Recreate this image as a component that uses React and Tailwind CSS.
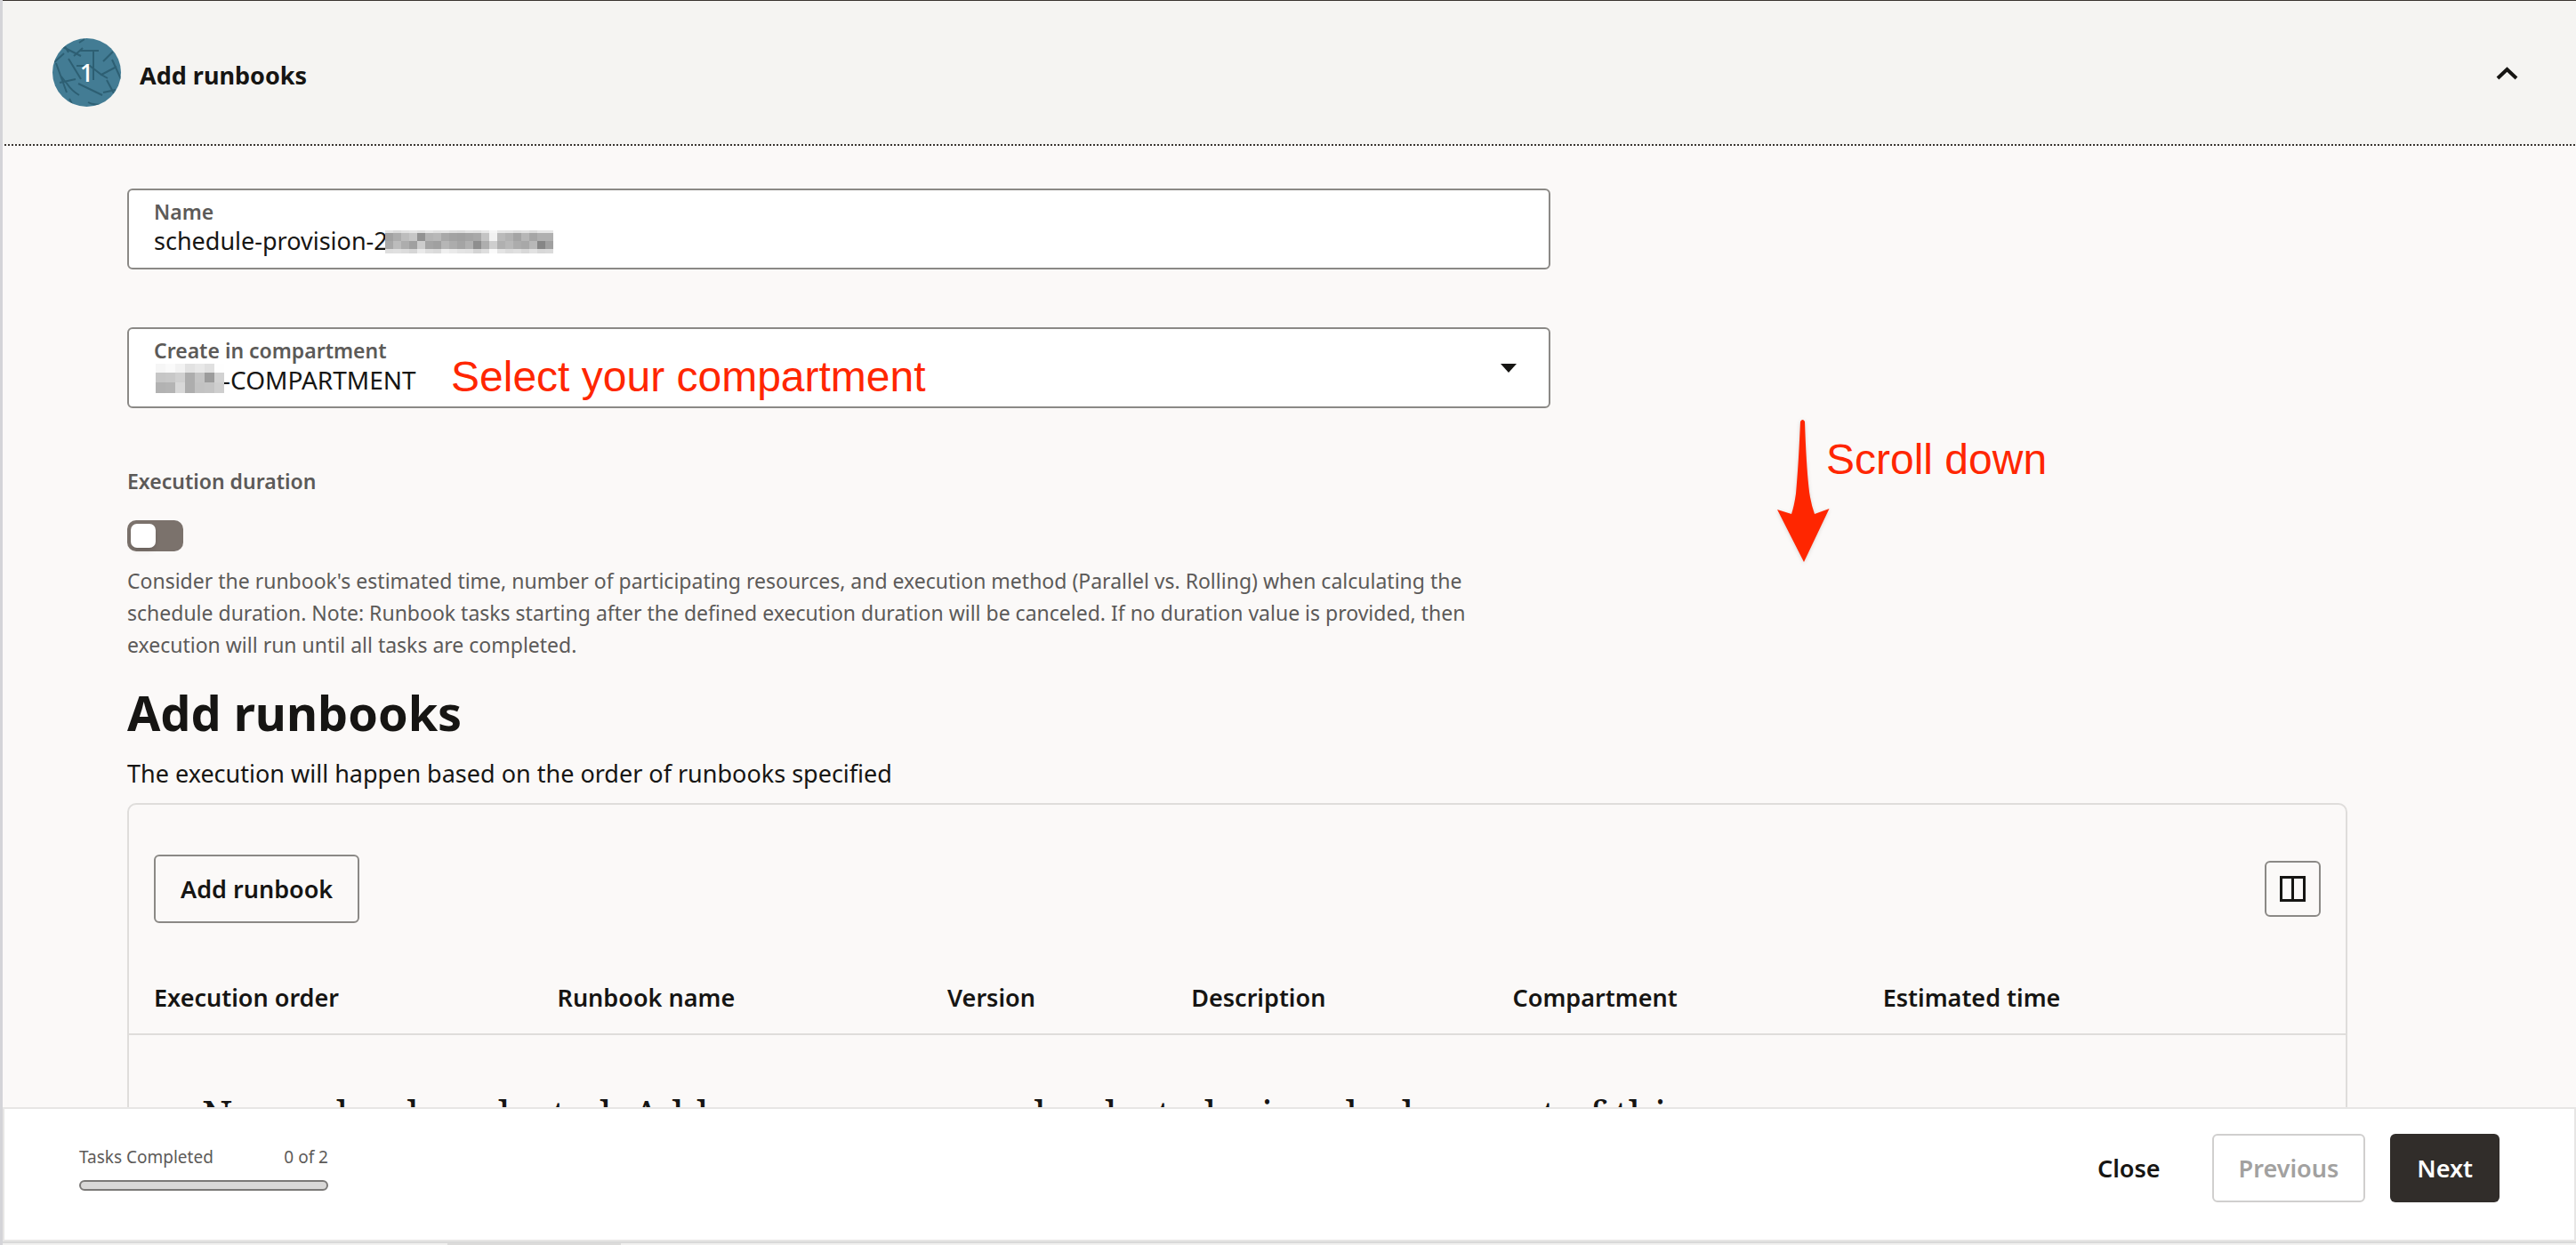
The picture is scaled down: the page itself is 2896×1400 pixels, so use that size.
const NAME_CELLS = [
  '#e4e4e4 #dcdcdc #e2e2e2 #e6e6e6 #e0e0e0 #e8e8e8 #e2e2e2 #e4e4e4 #dedede #dcdcdc #e2e2e2 #e0e0e0 #e8e8e8 #f6f6f6 #e6e6e6 #e4e4e4 #dedede #e2e2e2 #dcdcdc #e6e6e6 #e6e6e6'.split(' '),
  '#a2a2a2 #adadad #bdbdbd #c6c6c6 #929292 #b4b4b4 #b8b8b8 #a8a8a8 #a2a2a2 #a0a0a0 #a4a4a4 #a8a8a8 #c4c4c4 #f2f2f2 #bababa #b2b2b2 #a4a4a4 #b6b6b6 #a6a6a6 #b0b0b0 #b0b0b0'.split(' '),
  '#a8a8a8 #bcbcbc #adadad #a0a0a0 #cccccc #a4a4a4 #a0a0a0 #b6b6b6 #acacac #a4a4a4 #b0b0b0 #8e8e8e #aeaeae #cecece #b0b0b0 #b8b8b8 #acacac #a8a8a8 #b8b8b8 #868686 #a0a0a0'.split(' '),
  '#dedede #e0e0e0 #dcdcdc #d6d6d6 #eaeaea #dedede #dadada #f0f0f0 #eaeaea #e4e4e4 #e2e2e2 #d4d4d4 #dedede #fafafa #e4e4e4 #dcdcdc #e0e0e0 #d8d8d8 #e2e2e2 #d8d8d8 #dadada'.split(' '),
];

const COMPARTMENT_CELLS = [
  '#f6f6f6 #fafafa #f2f2f2 #e2e2e2 #e8e8e8 #e0e0e0 #fefefe'.split(' '),
  '#c6c6c6 #c8c8c8 #d0d0d0 #adadad #c4c4c4 #9c9c9c #d2d2d2'.split(' '),
  '#b2b2b2 #b4b4b4 #d8d8d8 #adadad #c2c2c2 #c4c4c4 #cecece'.split(' '),
];

function Mosaic({ cells, heights, cell, className }) {
  const total = heights.reduce((a, b) => a + b, 0);
  return (
    <svg
      aria-hidden="true"
      className={className}
      width={cells[0].length * cell}
      height={total}
      shapeRendering="crispEdges"
    >
      {cells.map((row, r) => {
        const y = heights.slice(0, r).reduce((a, b) => a + b, 0);
        return row.map((fill, c) => (
          <rect key={`${r}-${c}`} x={c * cell} y={y} width={cell} height={heights[r]} fill={fill} />
        ));
      })}
    </svg>
  );
}

function StepBadge() {
  return (
    <div className="relative flex size-[77px] shrink-0 items-center justify-center overflow-hidden rounded-full bg-[#437c94]">
      <svg aria-hidden="true" className="absolute inset-0 size-full" viewBox="0 0 77 77" fill="none" stroke="#2d5f73" strokeWidth="2">
        <path d="M14 9l4 7M12 10l20 10M24 20l10-9M30 14h22M46 14v33M30 5l6-4M68 15L57 26M2 27l11-10M4 28l12 33M18 23l14 23M27 31h15l13 10l17-9M55 41l7 4M67 24l10 22M8 50l18-4M9 42l8 10c4 6 8 9 13 12M29 51l27 13M61 47l8 15M57 61l14-3M19 68l3 6M40 72c5 3 9 2 13 3" />
      </svg>
      <span className="relative text-[27px] leading-9 font-medium text-white">1</span>
    </div>
  );
}

const COLUMNS = [
  ['Execution order', 'w-[18.2%]'],
  ['Runbook name', 'w-[17.6%]'],
  ['Version', 'w-[11%]'],
  ['Description', 'w-[14.5%]'],
  ['Compartment', 'w-[16.7%]'],
  ['Estimated time', 'w-[22%]'],
];

export default function App() {
  return (
    <div className="flex h-screen flex-col overflow-hidden border-l-3 border-[#d4d4d8] bg-[#fbf9f8] font-['Noto_Sans',sans-serif] text-[#161513]">
      <header className="flex shrink-0 items-center justify-between border-t border-t-[#3a3531] bg-[#f5f4f2] pr-[64px] pl-14">
        <div className="flex items-center gap-[21px] py-[42px]">
          <StepBadge />
          <h2 className="pt-[6px] text-[27px] leading-9 font-bold">Add runbooks</h2>
        </div>
        <button type="button" aria-label="Collapse Add runbooks" className="flex size-[27px] items-center justify-center">
          <svg width="27" height="27" viewBox="0 0 27 27" fill="none" stroke="#161513" strokeWidth="4">
            <path d="M3 20L13.500 10L24 20" />
          </svg>
        </button>
      </header>
      <div className="h-[2px] shrink-0 bg-[repeating-linear-gradient(90deg,#f5f4f2_0_2px,#3a3632_2px_4px)]" />

      <main className="relative min-h-0 flex-1 overflow-hidden pt-12 pr-[257px] pl-[140px]">
        <div className="max-w-[1600px]">
          <div className="relative rounded-md border-2 border-[#8b8986] bg-white px-7 pt-[9px] pb-3">
            <label htmlFor="name" className="block text-[23px] leading-[30px] font-semibold text-[#5c5a58]">Name</label>
            <input id="name" type="text" defaultValue="schedule-provision-2" className="block h-9 w-full bg-transparent text-[27px] leading-9 outline-none" />
            <Mosaic cells={NAME_CELLS} cell={9} heights={[3, 9, 9, 5]} className="absolute top-[45px] left-[288px]" />
          </div>

          <div className="relative mt-[65px] rounded-md border-2 border-[#8b8986] bg-white px-7 pt-[9px] pb-3">
            <label htmlFor="compartment" className="block text-[23px] leading-[30px] font-semibold text-[#5c5a58]">Create in compartment</label>
            <select id="compartment" className="block h-9 w-full appearance-none bg-transparent pl-[77px] text-[28px] leading-9 outline-none">
              <option>-COMPARTMENT</option>
            </select>
            <Mosaic cells={COMPARTMENT_CELLS} cell={11} heights={[10, 11, 12]} className="absolute top-[39px] left-[30px]" />
            <span className="pointer-events-none absolute top-[26px] left-[362px] text-[48px] leading-[56px] font-['Liberation_Sans',sans-serif] text-[#ff2600]">
              Select your compartment
            </span>
            <svg aria-hidden="true" className="pointer-events-none absolute top-[39px] right-[36px]" width="18" height="10" viewBox="0 0 18 10">
              <path d="M0 0H18L9 10Z" fill="#161513" />
            </svg>
          </div>

          <label htmlFor="duration" className="mt-[67px] block text-[23px] leading-[30px] font-semibold text-[#5c5a58]">Execution duration</label>
          <input
            id="duration"
            type="checkbox"
            role="switch"
            className="mt-[29px] block h-[35px] w-[63px] appearance-none rounded-[10px] bg-[#7b726c] p-1 before:block before:h-[27px] before:w-7 before:rounded-[7px] before:bg-white before:shadow-md"
          />
          <p className="mt-[15px] max-w-[1520px] text-[23px] leading-9 text-[#5c5a58]">
            Consider the runbook's estimated time, number of participating resources, and execution method (Parallel vs. Rolling) when calculating the schedule duration. Note: Runbook tasks starting after the defined execution duration will be canceled. If no duration value is provided, then execution will run until all tasks are completed.
          </p>
        </div>

        <h1 className="mt-[26px] text-[54px] leading-[64px] font-bold">Add runbooks</h1>
        <p className="mt-[19px] text-[27px] leading-9">The execution will happen based on the order of runbooks specified</p>

        <section className="mt-[15px] rounded-[10px] border-2 border-[#dfdddb]">
          <div className="flex items-center justify-between px-7 pt-14 pb-11">
            <button type="button" className="h-[77px] rounded-md border-2 border-[#8b8986] px-7 text-[27px] leading-9 font-semibold">Add runbook</button>
            <button type="button" aria-label="Manage columns" className="flex size-[63px] items-center justify-center rounded-md border-2 border-[#8b8986]">
              <svg width="29" height="29" viewBox="0 0 29 29" fill="none" stroke="#161513" strokeWidth="3">
                <path d="M1.500 1.500H27.500V27.500H1.500ZM14.500 1.500V27.500" />
              </svg>
            </button>
          </div>
          <table className="w-full table-fixed">
            <thead>
              <tr className="border-b-2 border-[#dfdddb]">
                {COLUMNS.map(([title, width]) => (
                  <th key={title} scope="col" className={`${width} px-7 py-[22px] text-left text-[27px] leading-9 font-semibold`}>{title}</th>
                ))}
              </tr>
            </thead>
            <tbody>
              <tr>
                <td colSpan={6} className="px-[82px] pt-[60px] pb-16 font-['Noto_Serif','Liberation_Serif',serif] text-[45px] leading-[60px]">
                  No runbooks selected. Add one or more runbooks to be invoked as part of this
                </td>
              </tr>
            </tbody>
          </table>
        </section>

        <div className="pointer-events-none absolute top-[307px] left-[1995px] flex items-start">
          <svg aria-hidden="true" width="59" height="162" viewBox="0 0 59 162" className="drop-shadow-sm">
            <path d="M26 3Q28.500 -1 31 3C32 35 34 70 37 88Q39 99 42 107L58.500 101L30 161L0 102L16 107Q19 98 21 84C24 50 25 25 26 3Z" fill="#ff2600" />
          </svg>
          <span className="-ml-1 pt-[18px] text-[48px] leading-[56px] font-['Liberation_Sans',sans-serif] text-[#ff2600]">Scroll down</span>
        </div>
      </main>

      <footer className="flex shrink-0 items-start justify-between border-2 border-[#e7e6e5] bg-white pt-7 pr-[84px] pb-[42px] pl-[84px]">
        <div className="w-[280px] pt-3 text-[19px] leading-7 text-[#5c5a58]">
          <div className="flex justify-between">
            <span id="tasks">Tasks Completed</span>
            <span>0 of 2</span>
          </div>
          <div role="progressbar" aria-labelledby="tasks" aria-valuenow={0} aria-valuemin={0} aria-valuemax={2} className="mt-3 h-3 rounded-md border-2 border-[#7b7977] bg-[#d9d8d7]" />
        </div>
        <div className="flex gap-7 text-[27px] leading-9 font-semibold">
          <button type="button" className="h-[77px] px-[30px]">Close</button>
          <button type="button" disabled className="h-[77px] rounded-md border-2 border-[#d0cfce] px-7 text-[#a2a1a0]">Previous</button>
          <button type="button" className="h-[77px] rounded-md bg-[#312d2a] px-[30px] text-white">Next</button>
        </div>
      </footer>
      <div className="flex h-1 shrink-0 border-t-2 border-[#d9d9d9] bg-[#f1f0ef] pl-[500px]">
        <div className="h-[2px] w-[195px] bg-[#dcdbda]" />
      </div>
    </div>
  );
}
